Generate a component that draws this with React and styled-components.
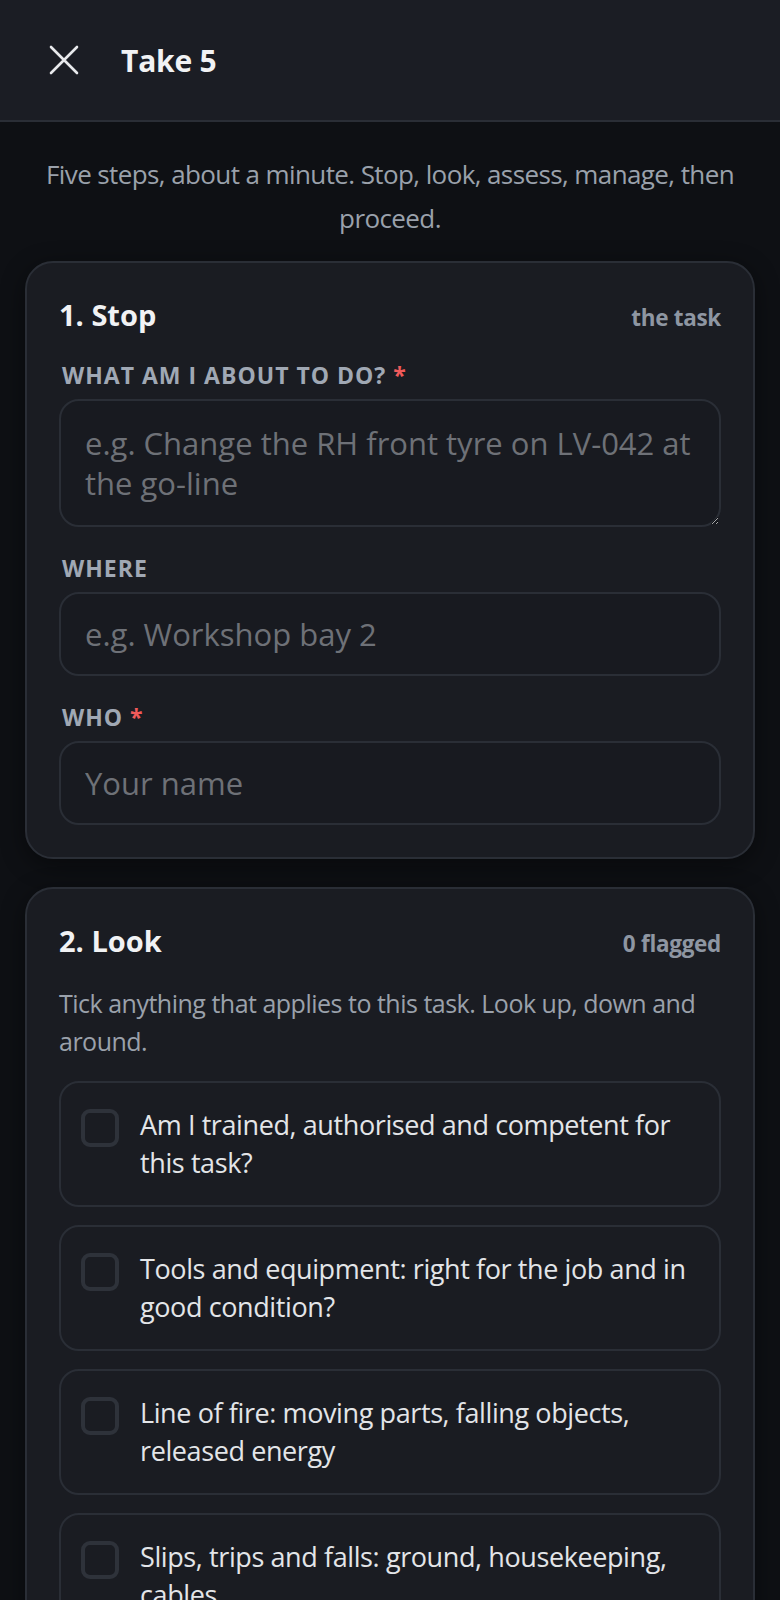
import styled, { createGlobalStyle } from 'styled-components';

const FONT = '"Open Sans", "Noto Sans", "Liberation Sans", sans-serif';

const COLOR = {
  PAGE: '#0e1014',
  HEADER: '#1b1d24',
  CARD: '#1a1c22',
  FIELD: '#181a20',
  BORDER: '#2a2e36',
  TEXT: '#f1f2f4',
  BODY: '#e3e5e8',
  MUTED: '#9aa1ab',
  LABEL: '#a0a8b4',
  PLACEHOLDER: '#6e7177',
  RED: '#f05a5a',
};

const LOOK_ITEMS = [
  'Am I trained, authorised and competent for this task?',
  'Tools and equipment: right for the job and in good condition?',
  'Line of fire: moving parts, falling objects, released energy',
  'Slips, trips and falls: ground, housekeeping, cables',
  'Working at height or near an edge?',
  'Stored energy: hydraulic, pneumatic, electrical, tyre pressure',
];

function CloseIcon() {
  return (
    <svg width="32" height="32" viewBox="0 0 32 32" fill="none">
      <path d="M3 3L29 29M29 3L3 29" stroke="#e8e9ec" strokeWidth="2.6" strokeLinecap="round" />
    </svg>
  );
}

function Field({ label, required, children }) {
  return (
    <FieldWrapper>
      <Label>
        {label}
        {required && <Required> *</Required>}
      </Label>
      {children}
    </FieldWrapper>
  );
}

function CheckItem({ text }) {
  return (
    <ItemRow>
      <CheckBox type="checkbox" />
      <ItemText>{text}</ItemText>
    </ItemRow>
  );
}

export default function App() {
  return (
    <>
      <GlobalStyle />
      <Header>
        <CloseButton aria-label="Close">
          <CloseIcon />
        </CloseButton>
        <HeaderTitle>Take 5</HeaderTitle>
      </Header>

      <Main>
        <Intro>Five steps, about a minute. Stop, look, assess, manage, then proceed.</Intro>

        <Card>
          <CardHeader>
            <CardTitle>1. Stop</CardTitle>
            <CardMeta>the task</CardMeta>
          </CardHeader>
          <Field label="What am I about to do?" required>
            <TextArea rows={2} placeholder="e.g. Change the RH front tyre on LV-042 at the go-line" />
          </Field>
          <Field label="Where">
            <Input placeholder="e.g. Workshop bay 2" />
          </Field>
          <Field label="Who" required>
            <Input placeholder="Your name" />
          </Field>
        </Card>

        <Card>
          <CardHeader>
            <CardTitle>2. Look</CardTitle>
            <CardMeta>0 flagged</CardMeta>
          </CardHeader>
          <Description>Tick anything that applies to this task. Look up, down and around.</Description>
          <ItemList>
            {LOOK_ITEMS.map((item) => (
              <CheckItem key={item} text={item} />
            ))}
          </ItemList>
        </Card>
      </Main>
    </>
  );
}

const GlobalStyle = createGlobalStyle`
  * {
    box-sizing: border-box;
  }

  body {
    margin: 0;
    background: ${COLOR.PAGE};
    font-family: ${FONT};
    color: ${COLOR.TEXT};
  }
`;

const Header = styled.header`
  height: 122px;
  padding-left: 48px;
  display: flex;
  align-items: center;
  gap: 41px;
  background: ${COLOR.HEADER};
  border-bottom: 2px solid ${COLOR.BORDER};
`;

const CloseButton = styled.button`
  width: 32px;
  height: 32px;
  padding: 0;
  border: none;
  background: none;
  display: flex;
  cursor: pointer;
`;

const HeaderTitle = styled.h1`
  margin: 0;
  font-size: 30px;
  font-weight: 700;
  color: ${COLOR.TEXT};
  letter-spacing: -0.2px;
`;

const Main = styled.main`
  padding: 30px 25px 40px;
  display: flex;
  flex-direction: column;
  gap: 28px;
`;

const Intro = styled.p`
  margin: 0 0 -7px;
  text-align: center;
  font-size: 26px;
  line-height: 44px;
  letter-spacing: -0.6px;
  color: ${COLOR.MUTED};
`;

const Card = styled.section`
  padding: 32px;
  background: ${COLOR.CARD};
  border: 2px solid ${COLOR.BORDER};
  border-radius: 28px;
  box-shadow: 0 6px 24px rgba(0, 0, 0, 0.45);
`;

const CardHeader = styled.div`
  display: flex;
  justify-content: space-between;
  align-items: baseline;
  line-height: 39px;
`;

const CardTitle = styled.h2`
  margin: 0;
  font-size: 29px;
  font-weight: 700;
  color: ${COLOR.TEXT};
`;

const CardMeta = styled.span`
  font-size: 22.5px;
  font-weight: 700;
  letter-spacing: -0.3px;
  color: #8e96a2;
`;

const FieldWrapper = styled.div`
  margin-top: 26px;

  ${CardHeader} + & {
    margin-top: 23px;
  }
`;

const Label = styled.div`
  padding-left: 3px;
  margin-bottom: 9px;
  font-size: 23px;
  line-height: 30px;
  font-weight: 700;
  text-transform: uppercase;
  letter-spacing: 1px;
  color: ${COLOR.LABEL};
`;

const Required = styled.span`
  color: ${COLOR.RED};
`;

const fieldBase = `
  width: 100%;
  background: ${COLOR.FIELD};
  border: 2px solid ${COLOR.BORDER};
  border-radius: 20px;
  font-family: ${FONT};
  font-size: 31px;
  color: ${COLOR.BODY};
  outline: none;

  &::placeholder {
    color: ${COLOR.PLACEHOLDER};
  }
`;

const TextArea = styled.textarea`
  ${fieldBase}
  display: block;
  margin-bottom: 7px;
  padding: 22px 24px;
  line-height: 40px;
  resize: vertical;
`;

const Input = styled.input`
  ${fieldBase}
  display: block;
  height: 84px;
  padding: 0 24px;
`;

const Description = styled.p`
  margin: 21px 0 21px;
  font-size: 25px;
  line-height: 38px;
  letter-spacing: -0.5px;
  color: ${COLOR.MUTED};
`;

const ItemList = styled.div`
  display: flex;
  flex-direction: column;
  gap: 18px;
`;

const ItemRow = styled.label`
  display: flex;
  align-items: flex-start;
  gap: 21px;
  padding: 23px 20px;
  border: 2px solid ${COLOR.BORDER};
  border-radius: 20px;
  background: ${COLOR.CARD};
  cursor: pointer;
`;

const CheckBox = styled.input`
  appearance: none;
  flex-shrink: 0;
  width: 38px;
  height: 38px;
  margin: 3px 0 0;
  border: 4px solid #2e323a;
  border-radius: 9px;
  background: transparent;
  cursor: pointer;
`;

const ItemText = styled.span`
  font-size: 27px;
  line-height: 38px;
  letter-spacing: -0.4px;
  color: ${COLOR.BODY};
`;
